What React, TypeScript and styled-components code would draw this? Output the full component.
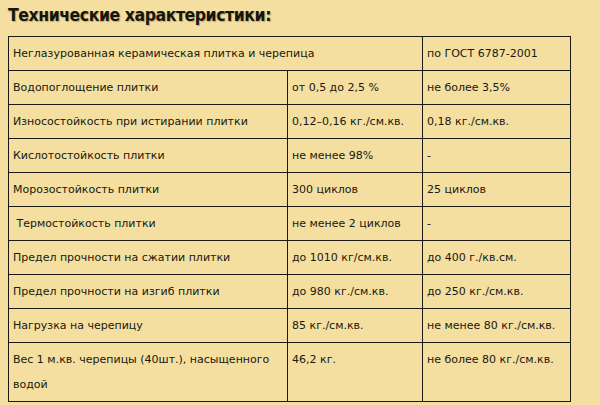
import React from 'react'
import styled, {createGlobalStyle} from 'styled-components'

const specRows = [
  {name: 'Неглазурованная керамическая плитка и черепица', value: null, norm: 'по ГОСТ 6787-2001'},
  {name: 'Водопоглощение плитки', value: 'от 0,5 до 2,5 %', norm: 'не более 3,5%'},
  {name: 'Износостойкость при истирании плитки', value: '0,12–0,16 кг./см.кв.', norm: '0,18 кг./см.кв.'},
  {name: 'Кислотостойкость плитки', value: 'не менее 98%', norm: '-'},
  {name: 'Морозостойкость плитки', value: '300 циклов', norm: '25 циклов'},
  {name: ' Термостойкость плитки', value: 'не менее 2 циклов', norm: '-'},
  {name: 'Предел прочности на сжатии плитки', value: 'до 1010 кг/см.кв.', norm: 'до 400 г./кв.см.'},
  {name: 'Предел прочности на изгиб плитки', value: 'до 980 кг./см.кв.', norm: 'до 250 кг./см.кв.'},
  {name: 'Нагрузка на черепицу', value: '85 кг./см.кв.', norm: 'не менее 80 кг./см.кв.'},
  {name: 'Вес 1 м.кв. черепицы (40шт.), насыщенного водой', value: '46,2 кг.', norm: 'не более 80 кг./см.кв.'},
]

const GlobalStyle = createGlobalStyle`
  html, body {
    margin: 0;
    background: #f5dfa0;
  }
`

export default function App() {
  return (
    <Page>
      <GlobalStyle/>
      <Title>Технические характеристики:</Title>
      <SpecTable>
        <colgroup>
          <col style={{width: 279}}/>
          <col style={{width: 135}}/>
          <col/>
        </colgroup>
        <tbody>
          {specRows.map((row, i) => (
            <tr key={i}>
              {row.value === null ? (
                <Cell colSpan={2}>{row.name}</Cell>
              ) : (
                <>
                  <Cell>{row.name}</Cell>
                  <Cell>{row.value}</Cell>
                </>
              )}
              <Cell>{row.norm}</Cell>
            </tr>
          ))}
        </tbody>
      </SpecTable>
    </Page>
  )
}

const Page = styled.div`
  width: 600px;
  height: 405px;
  padding: 4px 0 0 8px;
  box-sizing: border-box;
  background: #f5dfa0;
  font-family: "DejaVu Sans", Tahoma, sans-serif;
  color: #1c1c14;
`

const Title = styled.h2`
  margin: 0 0 10px;
  font-family: "DejaVu Sans Condensed", "DejaVu Sans", sans-serif;
  font-size: 17.5px;
  line-height: 22px;
  font-weight: bold;
  letter-spacing: -0.45px;
  color: #16160e;
  text-shadow: 1px 1px 1px rgba(80, 70, 40, 0.35);
`

const SpecTable = styled.table`
  width: 563px;
  border-collapse: collapse;
  table-layout: fixed;
  border: 1px solid #1a1a12;
`

const Cell = styled.td`
  border: 1px solid #1a1a12;
  padding: 4px 4px;
  font-size: 11px;
  line-height: 25px;
  vertical-align: top;
  white-space: pre-wrap;
  color: #18180f;
`
